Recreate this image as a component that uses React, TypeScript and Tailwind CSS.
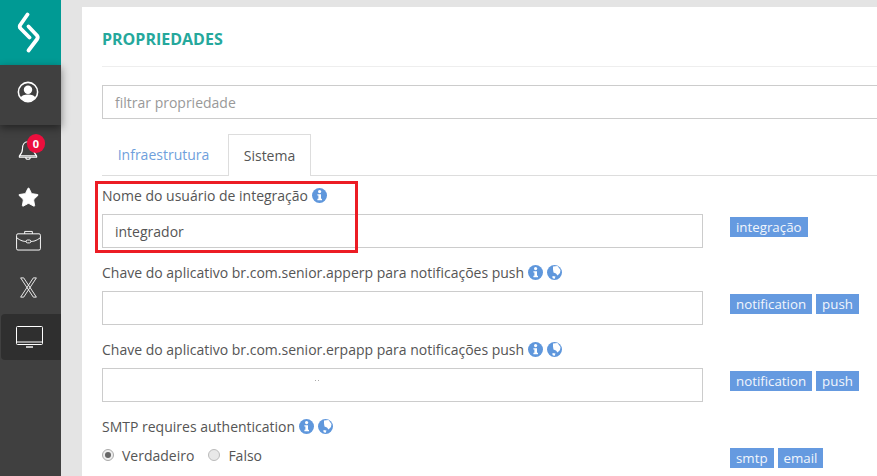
import { Star } from 'lucide-react';

function LogoIcon() {
  return (
    <svg width="24" height="42" viewBox="0 0 24 42" fill="none" stroke="#fff" strokeWidth="3.8" strokeLinecap="round" strokeLinejoin="round">
      <path d="M10.5 2.5 L3.2 13 C2.4 14.5 2.6 15.5 3.6 16.5 L12.5 25.5" />
      <path d="M11.5 14.5 L20 23.5 C21 24.8 21 25.8 20.2 27 L11.5 38.5" />
    </svg>
  );
}

function UserIcon() {
  return (
    <svg width="22" height="22" viewBox="0 0 24 24">
      <circle cx="12" cy="12" r="10.5" fill="none" stroke="#fff" strokeWidth="1.7" />
      <circle cx="12" cy="9.5" r="4.6" fill="#fff" />
      <path d="M3.8 18.5 C5 15.5 8 14.6 12 14.6 C16 14.6 19 15.5 20.2 18.5 C18 21.2 15 22.2 12 22.2 C9 22.2 6 21.2 3.8 18.5 Z" fill="#fff" />
    </svg>
  );
}

function BellIcon() {
  return (
    <svg width="20" height="24" viewBox="0 0 22 24" fill="none" stroke="#fff" strokeWidth="1.2" strokeLinejoin="round">
      <path d="M11 3 C6.5 3 5 6.5 5 10 C5 14 4 16 1.5 18.5 H20.5 C18 16 17 14 17 10 C17 6.5 15.5 3 11 3 Z" />
      <path d="M1.5 18.5 V20 H20.5 V18.5" />
      <path d="M8.5 20 C8.5 23 13.5 23 13.5 20" />
    </svg>
  );
}

function CaseIcon() {
  return (
    <svg width="25" height="21" viewBox="0 0 26 22" fill="none" stroke="#fff" strokeWidth="1">
      <rect x="0.5" y="4" width="25" height="17" rx="1.5" />
      <path d="M9 4 V1.5 H17 V4" />
      <path d="M0.5 8 C5 11.5 8 12 10.5 12 M15.5 12 C18 12 21 11.5 25.5 8" />
      <rect x="10.5" y="10.5" width="5" height="3" rx="1.5" />
    </svg>
  );
}

function XIcon() {
  return (
    <svg width="19" height="21" viewBox="0 0 20 24" fill="none" stroke="#fff" strokeWidth="1">
      <path d="M1 1 H4.5 L19 23 H15.5 Z" />
      <path d="M19 1 H15.5 L1 23 H4.5 Z" />
    </svg>
  );
}

function MonitorIcon() {
  return (
    <svg width="27" height="22" viewBox="0 0 27 22" fill="none" stroke="#fff" strokeWidth="1">
      <rect x="0.5" y="0.5" width="26" height="18" rx="1" />
      <path d="M0.5 16 H26.5" />
      <path d="M10 21 H17" strokeWidth="1.4" />
    </svg>
  );
}

function InfoIcon() {
  return (
    <svg width="15" height="15" viewBox="0 0 15 15" className="shrink-0">
      <circle cx="7.5" cy="7.5" r="7.5" fill="#5f97dc" />
      <circle cx="7.6" cy="3.6" r="1.6" fill="#fff" />
      <path d="M5.4 6.2 H9 V10.8 H10 V12.2 H5.4 V10.8 H6.4 V7.6 H5.4 Z" fill="#fff" />
    </svg>
  );
}

function GlobeIcon() {
  return (
    <svg width="15" height="15" viewBox="0 0 15 15" className="shrink-0">
      <circle cx="7.5" cy="7.5" r="7.5" fill="#5f97dc" />
      <path d="M6 1.5 L10.5 1 L13.5 5 L13 8 L10.5 10.5 L9 8.5 L6.5 7.5 L6 4.5 Z" fill="#fff" />
      <path d="M5.5 11 L8.5 11.5 L7.5 14 L5.5 13 Z" fill="#fff" />
    </svg>
  );
}

function Tag({ text }: { text: string }) {
  return <span className="h-5 px-[6px] bg-[#659ae0] text-[#f2f6fc] text-[13.3px] leading-5">{text}</span>;
}

interface FieldProps {
  label: string;
  value?: string;
  globe?: boolean;
  tags: string[];
  dots?: boolean;
}

function Field({ label, value, globe, tags, dots }: FieldProps) {
  return (
    <div className="h-[77px] pt-[9px]">
      <div className="h-5 flex items-center gap-1 text-[14px] text-[#555]">
        <span>{label}</span>
        <InfoIcon />
        {globe && <GlobeIcon />}
      </div>
      <div className="mt-[9px] flex items-start">
        <div className="relative w-[601px] h-[34px] border border-[#ccc] px-3 flex items-center text-[14px] text-[#555]">
          {value}
          {dots && (
            <>
              <span className="absolute left-[212px] top-[11px] w-px h-px bg-[#aaa]" />
              <span className="absolute left-[215px] top-[11px] w-px h-px bg-[#aaa]" />
            </>
          )}
        </div>
        <div className="ml-[27px] mt-[3px] flex gap-1">
          {tags.map((t) => (
            <Tag key={t} text={t} />
          ))}
        </div>
      </div>
    </div>
  );
}

export default function App() {
  return (
    <div className="w-[877px] h-[476px] overflow-hidden flex bg-[#e4e4e4] font-['Open_Sans',sans-serif]">
      <aside className="w-[61px] shrink-0 bg-[#404040] flex flex-col">
        <div className="h-[65px] bg-[#009a94] flex items-center justify-center pr-[3px]">
          <LogoIcon />
        </div>
        <div className="h-[60px] bg-[#404040] shadow-[0_3px_8px_rgba(0,0,0,0.45)] pt-[16px] pr-[5px] flex justify-center items-start">
          <UserIcon />
        </div>
        <div className="relative h-[50px] flex items-center justify-center pr-[5px]">
          <BellIcon />
          <span className="absolute left-[27px] top-[9px] w-[18px] h-[19px] rounded-full bg-[#ec0f3d] text-white text-[11px] font-bold leading-[19px] text-center">0</span>
        </div>
        <div className="h-[44px] flex items-center justify-center pr-[5px]">
          <Star size={23} fill="#fff" stroke="#fff" strokeWidth={1} strokeLinejoin="miter" />
        </div>
        <div className="h-[42px] flex items-center justify-center pr-[4px]">
          <CaseIcon />
        </div>
        <div className="h-[53px] flex items-center justify-center pr-[5px]">
          <XIcon />
        </div>
        <div className="ml-[1px] h-[46px] bg-[#2f2f2f] rounded-l-[4px] flex items-center justify-center pr-[3px]">
          <MonitorIcon />
        </div>
      </aside>
      <main className="flex-1 min-w-0 pt-[7px] pl-[21px]">
        <div className="relative bg-white h-[469px] pl-5 overflow-hidden">
          <div className="h-[60px] border-b-[1px] border-[#eee] pt-[22px]">
            <h1 className="text-[16px] leading-5 font-bold text-[#25a89c]">PROPRIEDADES</h1>
          </div>
          <div className="mt-[18px] w-[800px] h-[34px] border border-[#ccc] px-3 flex items-center text-[14px] text-[#999]">
            filtrar propriedade
          </div>
          <div className="mt-[15px] h-[42px] flex border-b border-[#ddd] items-end">
            <div className="w-[126px] h-[41px] pr-[3px] flex items-center justify-center text-[14px] text-[#6f9fdc]">Infraestrutura</div>
            <div className="w-[83px] h-[42px] -mb-px bg-white border border-b-0 border-[#ddd] flex items-center justify-center text-[14px] text-[#555]">Sistema</div>
          </div>
          <Field label="Nome do usuário de integração" value="integrador" tags={['integração']} />
          <Field label="Chave do aplicativo br.com.senior.apperp para notificações push" globe tags={['notification', 'push']} />
          <Field label="Chave do aplicativo br.com.senior.erpapp para notificações push" globe dots tags={['notification', 'push']} />
          <div className="pt-[9px]">
            <div className="h-5 flex items-center gap-1 text-[14px] text-[#555]">
              <span>SMTP requires authentication</span>
              <InfoIcon />
              <GlobeIcon />
            </div>
            <div className="mt-[9px] flex items-center h-5 text-[14px] text-[#555]">
              <span className="w-3 h-3 rounded-full border border-[#aaa] bg-[#eee] flex items-center justify-center">
                <span className="w-[6px] h-[6px] rounded-full bg-[#666]" />
              </span>
              <span className="ml-2">Verdadeiro</span>
              <span className="ml-[14px] w-3 h-3 rounded-full border border-[#bbb] bg-[#e8e8e8]" />
              <span className="ml-2">Falso</span>
              <div className="ml-[468px] self-start mt-[3px] flex gap-1">
                <Tag text="smtp" />
                <Tag text="email" />
              </div>
            </div>
          </div>
          <div className="absolute left-[13px] top-[174px] w-[263px] h-[72px] border-[3px] border-[#ec1c24] pointer-events-none" />
        </div>
      </main>
    </div>
  );
}
